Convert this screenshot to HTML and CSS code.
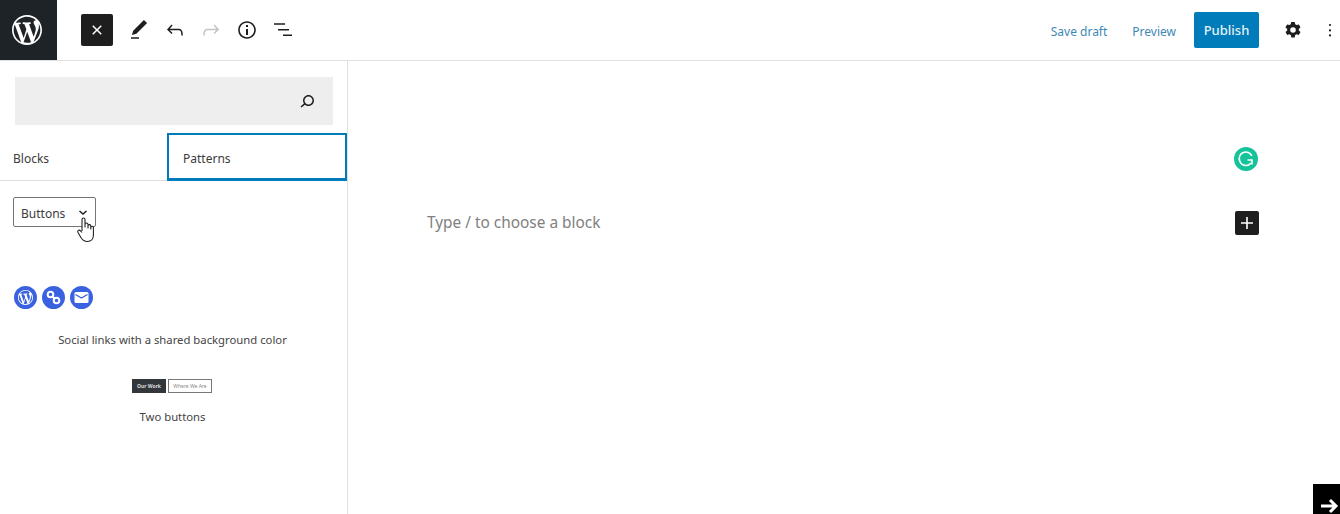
FILE: index.html
```html
<!DOCTYPE html>
<html lang="en">
<head>
  <meta charset="UTF-8">
  <meta name="viewport" content="width=device-width, initial-scale=1.0">
  <title>Add New Post</title>
  <link rel="stylesheet" href="styles.css">
</head>
<body>
  <header class="topbar">
    <a class="wp-logo" href="#">
      <svg width="30" height="30" viewBox="0 0 20 20" fill="#fff"><path d="M20 10c0-5.520-4.480-10-10-10S0 4.480 0 10s4.480 10 10 10 10-4.480 10-10zM7.780 15.370L4.370 6.220c.55-.02 1.170-.08 1.170-.08.500-.06.440-1.130-.06-1.110 0 0-1.450.11-2.370.11-.18 0-.37 0-.58-.01C4.120 2.690 6.880 1.100 10 1.100c2.330 0 4.450.87 6.030 2.340-.68-.11-1.650.39-1.650 1.580 0 .74.450 1.360.9 2.100.35.61.55 1.360.55 2.460 0 1.490-1.400 5-1.400 5l-3.030-8.370c.54-.02.82-.17.82-.17.500-.05.440-1.250-.06-1.220 0 0-1.440.12-2.380.12-.87 0-2.330-.12-2.330-.12-.5-.03-.56 1.200-.06 1.220l.92.080 1.260 3.410zM17.410 10c.24-.64.740-1.870.43-4.250.7 1.290 1.050 2.710 1.050 4.250 0 3.290-1.730 6.240-4.400 7.780.97-2.590 1.940-5.200 2.920-7.780zM6.100 18.090C3.120 16.650 1.110 13.530 1.110 10c0-1.300.23-2.480.72-3.590C3.250 10.300 4.670 14.200 6.100 18.090zm4.030-6.950l2.580 6.980c-.86.29-1.760.45-2.710.45-.79 0-1.570-.11-2.290-.33.81-2.380 1.620-4.740 2.420-7.100z"/></svg>
    </a>
    <div class="tools">
      <button class="icon-btn close-btn">
        <svg width="24" height="24" viewBox="0 0 24 24" fill="#fff"><path d="M12 13.060l3.712 3.713 1.061-1.060L13.061 12l3.712-3.712-1.060-1.060L12 10.938 8.288 7.227l-1.061 1.060L10.939 12l-3.712 3.712 1.060 1.061L12 13.061z"/></svg>
      </button>
      <button class="icon-btn">
        <svg width="24" height="24" viewBox="0 0 24 24" fill="#1e1e1e"><path d="M20.100 5.100L16.900 2 6.200 12.700l-1.300 4.400 4.500-1.300L20.100 5.100zM4 20.800h8v-1.500H4v1.500z"/></svg>
      </button>
      <button class="icon-btn">
        <svg width="24" height="24" viewBox="0 0 24 24" fill="#1e1e1e"><path d="M18.300 11.700c-.6-.6-1.400-.9-2.300-.9H6.700l2.900-3.300-1.100-1-4.500 5L8.500 16l1-1-2.700-2.700H16c.5 0 .9.200 1.300.5 1 1 1 3.400 1 4.500v.3h1.500v-.2c0-1.500 0-4.300-1.500-5.700z"/></svg>
      </button>
      <button class="icon-btn">
        <svg width="24" height="24" viewBox="0 0 24 24" fill="#c4c4c4"><path d="M15.600 6.500l-1.100 1 2.900 3.300H8c-.9 0-1.700.3-2.300.9-1.400 1.500-1.400 4.200-1.400 5.600v.2h1.500v-.3c0-1.100 0-3.500 1-4.500.3-.3.700-.5 1.300-.5h9.200L14.500 15l1.100 1.100 4.600-4.600-4.600-5z"/></svg>
      </button>
      <button class="icon-btn">
        <svg width="24" height="24" viewBox="0 0 24 24" fill="#1e1e1e"><path d="M12 3.200c-4.800 0-8.800 3.900-8.800 8.800 0 4.800 3.900 8.800 8.800 8.800 4.800 0 8.800-3.900 8.800-8.800 0-4.800-4-8.800-8.800-8.800zm0 16c-4 0-7.200-3.300-7.200-7.200C4.800 8 8 4.800 12 4.800s7.200 3.300 7.200 7.200c0 4-3.200 7.200-7.200 7.200zM11 17h2v-6h-2v6zm0-8h2V7h-2v2z"/></svg>
      </button>
      <button class="icon-btn">
        <svg width="24" height="24" viewBox="0 0 24 24" fill="#1e1e1e"><path d="M3 5.200h11v1.500H3zM7 11h11v1.500H7zM12 16.500h9V18h-9z"/></svg>
      </button>
    </div>
    <div class="actions">
      <a class="link-btn save-link" href="#">Save draft</a>
      <a class="link-btn" href="#">Preview</a>
      <button class="publish-btn">Publish</button>
      <button class="icon-btn settings-btn">
        <svg width="24" height="24" viewBox="0 0 24 24" fill="#1e1e1e"><path fill-rule="evenodd" d="M10.300 4h3.400l.5 2.300 1.400.8 2.200-.7 1.700 2.900-1.700 1.600v1.600l1.700 1.600-1.700 2.900-2.200-.7-1.400.8-.5 2.300h-3.400l-.5-2.300-1.400-.8-2.200.7-1.700-2.900 1.700-1.600v-1.600L4.400 9.300l1.700-2.900 2.200.7 1.400-.8.500-2.300zM12 9.200a2.800 2.800 0 100 5.600 2.800 2.800 0 000-5.600z"/></svg>
      </button>
      <button class="icon-btn more-btn">
        <svg width="24" height="24" viewBox="0 0 24 24" fill="#1e1e1e"><circle cx="12" cy="6" r="1.300"/><circle cx="12" cy="12.500" r="1.300"/><circle cx="12" cy="18.500" r="1.300"/></svg>
      </button>
    </div>
  </header>

  <div class="workspace">
    <aside class="inserter">
      <div class="search-box">
        <svg width="24" height="24" viewBox="0 0 24 24" fill="#1e1e1e"><path d="M13.500 6C10.500 6 8 8.500 8 11.500c0 1.100.3 2.100.9 3l-3.400 3 1 1.100 3.400-2.900c1 .9 2.200 1.400 3.600 1.400 3 0 5.500-2.500 5.500-5.500C19 8.500 16.500 6 13.500 6zm0 9.500c-2.200 0-4-1.800-4-4s1.800-4 4-4 4 1.800 4 4-1.800 4-4 4z"/></svg>
      </div>
      <div class="tabs">
        <div class="tab">Blocks</div>
        <div class="tab tab-active">Patterns</div>
      </div>
      <div class="filter">
        <div class="select">
          <span>Buttons</span>
          <svg width="16" height="16" viewBox="0 0 16 16" fill="none" stroke="#1e1e1e" stroke-width="1.500"><path d="M4.500 7l3.500 3 3.500-3"/></svg>
        </div>
        <svg class="hand" width="22" height="28" viewBox="0 0 22 28" fill="#fff" stroke="#222" stroke-width="1.100" stroke-linejoin="round"><path d="M6 15V3.500a1.500 1.500 0 013 0V11l0-2.500a1.500 1.500 0 013 0V12l0-2a1.400 1.400 0 012.800 0v3l0-1.500a1.300 1.300 0 012.600 0V19c0 3.500-2 6.500-6 6.500-3.500 0-5-1.500-6.500-4L2 16.500c-1-1.800 1-3.200 2.500-1.700L6 16.500"/></svg>
      </div>
      <div class="patterns">
        <div class="pattern social-pattern">
          <div class="social-icons">
            <span class="social-icon">
              <svg width="15" height="15" viewBox="0 0 20 20" fill="#fff"><path d="M20 10c0-5.520-4.480-10-10-10S0 4.480 0 10s4.480 10 10 10 10-4.480 10-10zM7.780 15.370L4.370 6.220c.55-.02 1.170-.08 1.170-.08.500-.06.440-1.130-.06-1.110 0 0-1.450.11-2.370.11-.18 0-.37 0-.58-.01C4.120 2.690 6.880 1.100 10 1.100c2.330 0 4.450.87 6.030 2.340-.68-.11-1.650.39-1.650 1.580 0 .74.450 1.360.9 2.100.35.61.55 1.360.55 2.460 0 1.490-1.400 5-1.400 5l-3.030-8.370c.54-.02.82-.17.82-.17.500-.05.440-1.250-.06-1.220 0 0-1.440.12-2.380.12-.87 0-2.330-.12-2.330-.12-.5-.03-.56 1.200-.06 1.220l.92.080 1.260 3.410zM17.410 10c.24-.64.740-1.870.43-4.250.7 1.290 1.050 2.710 1.050 4.250 0 3.290-1.730 6.240-4.400 7.780.97-2.590 1.940-5.200 2.920-7.780zM6.100 18.090C3.120 16.650 1.110 13.530 1.110 10c0-1.300.23-2.480.72-3.590C3.250 10.300 4.670 14.200 6.100 18.090zm4.030-6.950l2.580 6.980c-.86.29-1.760.45-2.710.45-.79 0-1.570-.11-2.290-.33.81-2.380 1.620-4.740 2.420-7.100z"/></svg>
            </span>
            <span class="social-icon">
              <svg width="17" height="17" viewBox="0 0 17 17" fill="none" stroke="#fff" stroke-width="2"><circle cx="5.500" cy="5.500" r="2.800"/><circle cx="11.500" cy="11.500" r="2.800"/><path d="M7.500 7.500l2 2"/></svg>
            </span>
            <span class="social-icon">
              <svg width="15" height="15" viewBox="0 0 15 15"><rect x="0.500" y="2" width="14" height="11" rx="1.500" fill="#fff"/><path d="M1.500 4.500l6 3.500 6-3.500" fill="none" stroke="#3a62e0" stroke-width="1.300"/></svg>
            </span>
          </div>
          <p class="pattern-label">Social links with a shared background color</p>
        </div>
        <div class="pattern">
          <div class="mini-buttons">
            <span class="mini-btn mini-dark">Our Work</span>
            <span class="mini-btn mini-outline">Where We Are</span>
          </div>
          <p class="pattern-label">Two buttons</p>
        </div>
      </div>
    </aside>

    <main class="editor">
      <span class="grammarly">
        <svg width="18" height="18" viewBox="0 0 18 18" fill="none" stroke="#fff" stroke-width="1.600"><path d="M14.800 6A6.500 6.500 0 102.700 11a6.500 6.500 0 0011.300 2"/><path d="M10.500 10h4.500v4.500"/></svg>
      </span>
      <div class="block-row">
        <span class="placeholder">Type / to choose a block</span>
        <button class="add-block">
          <svg width="24" height="24" viewBox="0 0 24 24" fill="#fff"><path d="M18 11.200h-5.200V6h-1.600v5.200H6v1.600h5.200V18h1.600v-5.200H18z"/></svg>
        </button>
      </div>
      <div class="corner-arrow">
        <svg width="20" height="16" viewBox="0 0 20 16" fill="none" stroke="#fff" stroke-width="3"><path d="M1 8h14M10 2l6 6-6 6"/></svg>
      </div>
    </main>
  </div>
</body>
</html>
```

FILE: styles.css
```css
* {
  box-sizing: border-box;
}

body {
  font-family: 'Noto Sans', 'Open Sans', sans-serif;
  background-color: #fff;
  color: #1e1e1e;
  margin: 0;
  width: 1340px;
  height: 514px;
  overflow: hidden;
}

button {
  font-family: inherit;
  border: none;
  background: none;
  padding: 0;
  cursor: pointer;
}

/* top bar */
.topbar {
  display: flex;
  align-items: center;
  height: 61px;
  border-bottom: 1px solid #e0e0e0;
}

.wp-logo {
  display: flex;
  align-items: center;
  justify-content: center;
  width: 57px;
  height: 60px;
  padding-right: 3px;
  background-color: #1e2327;
}

.tools {
  display: flex;
  align-items: center;
  gap: 4px;
  margin-left: 24px;
}

.icon-btn {
  display: flex;
  align-items: center;
  justify-content: center;
  width: 32px;
  height: 32px;
}

.close-btn {
  background-color: #1e1e1e;
  border-radius: 2px;
  margin-right: 6px;
}

.actions {
  display: flex;
  align-items: center;
  margin-left: auto;
}

.link-btn {
  color: #3d89b5;
  font-size: 12px;
  text-decoration: none;
  margin-right: 18px;
  padding-top: 2px;
}

.save-link {
  margin-right: 25px;
}

.publish-btn {
  width: 65px;
  height: 36px;
  background-color: #007cba;
  color: #e6f2f8;
  font-size: 13px;
  font-weight: 500;
  border-radius: 2px;
}

.settings-btn {
  margin-left: 18px;
}

.more-btn {
  width: 20px;
  margin-left: 11px;
}

/* inserter */
.workspace {
  display: flex;
  height: 453px;
}

.inserter {
  position: relative;
  width: 348px;
  border-right: 1px solid #e0e0e0;
  font-size: 12px;
}

.search-box {
  display: flex;
  align-items: center;
  justify-content: flex-end;
  height: 48px;
  margin: 16px 14px 8px 15px;
  padding-right: 14px;
  background-color: #eeeeee;
}

.tabs {
  display: flex;
  height: 48px;
  border-bottom: 1px solid #ddd;
}

.tab {
  display: flex;
  align-items: center;
  width: 167px;
  padding: 3px 0 0 13px;
  color: #3c3c3c;
}

.tab-active {
  width: 180px;
  padding: 3px 0 0 14px;
  border: 2px solid #007cba;
  border-bottom-width: 3px;
  margin-bottom: -1px;
}

.filter {
  position: relative;
  padding: 16px 13px;
}

.select {
  display: flex;
  align-items: center;
  justify-content: space-between;
  width: 83px;
  height: 30px;
  padding: 2px 4px 0 7px;
  border: 1px solid #757575;
  border-radius: 2px;
  color: #3c3c3c;
}

.select svg {
  margin-top: -2px;
}

.hand {
  position: absolute;
  left: 76px;
  top: 35px;
}

.patterns {
  margin-top: 43px;
}

.pattern {
  text-align: center;
}

.social-pattern {
  margin-bottom: 31px;
}

.social-icons {
  display: flex;
  gap: 5px;
  padding-left: 14px;
}

.social-icon {
  display: flex;
  align-items: center;
  justify-content: center;
  width: 23px;
  height: 23px;
  border-radius: 50%;
  background-color: #3a62e0;
}

.pattern-label {
  margin: 23px 0 0;
  font-size: 11.300px;
  line-height: 16px;
  color: #444;
  padding-right: 2px;
}

.mini-buttons {
  display: flex;
  justify-content: center;
  gap: 2px;
  padding-right: 3px;
}

.mini-btn {
  display: flex;
  align-items: center;
  justify-content: center;
  height: 14px;
  font-size: 5px;
  white-space: nowrap;
}

.mini-dark {
  width: 34px;
  background-color: #32373c;
  color: #ddd;
  font-weight: 700;
}

.mini-outline {
  width: 44px;
  border: 1px solid #777;
  color: #888;
}

.mini-buttons + .pattern-label {
  margin-top: 16px;
}

/* editor */
.editor {
  position: relative;
  flex: 1;
}

.grammarly {
  position: absolute;
  left: 886px;
  top: 86px;
  display: flex;
  align-items: center;
  justify-content: center;
  width: 24px;
  height: 24px;
  border-radius: 50%;
  background-color: #15c39a;
}

.block-row {
  display: flex;
  align-items: center;
  justify-content: space-between;
  margin: 150px 81px 0 79px;
  height: 24px;
}

.placeholder {
  font-size: 15.400px;
  color: #808080;
  margin-top: -2px;
}

.add-block {
  display: flex;
  align-items: center;
  justify-content: center;
  width: 24px;
  height: 24px;
  border-radius: 2px;
  background-color: #1e1e1e;
}

.corner-arrow {
  position: absolute;
  right: 0;
  bottom: 0;
  display: flex;
  align-items: flex-end;
  justify-content: flex-end;
  width: 27px;
  height: 30px;
  background-color: #000;
}
```
